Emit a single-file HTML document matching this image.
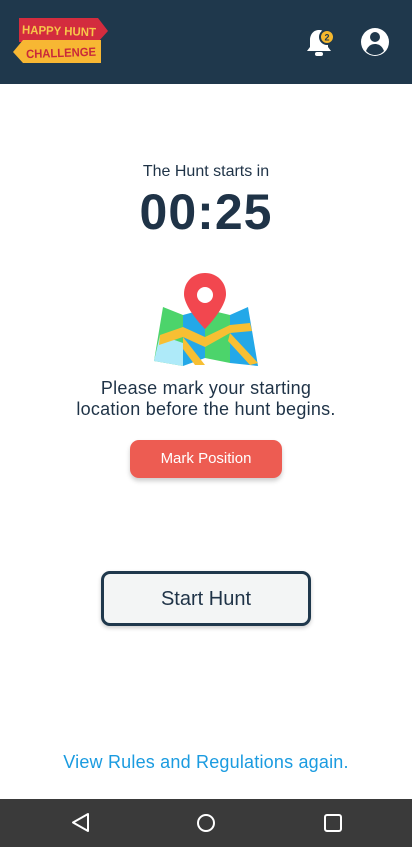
<!DOCTYPE html>
<html><head><meta charset="utf-8"><style>
*{margin:0;padding:0;box-sizing:border-box}
body{width:412px;height:847px;position:relative;background:#fff;font-family:"Liberation Sans",sans-serif;overflow:hidden;color:#1f3347}
.hdr{position:absolute;left:0;top:0;width:412px;height:84px;background:#1f384c}
.t{position:absolute;left:0;width:412px;text-align:center}
.nav{position:absolute;left:0;top:799px;width:412px;height:48px;background:#3a3a3a}
</style></head><body>
<div class="hdr">
<svg width="412" height="84" style="position:absolute;left:0;top:0">
<polygon points="19,18 98,18 108,31 98,42 19,42" fill="#d32c3e"/>
<polygon points="23,40 101,40 101,63 23,63 13,52" fill="#f7b733"/>
<text x="22" y="35" font-family="Liberation Sans" font-weight="bold" font-size="12" fill="#f7c64a" textLength="74" lengthAdjust="spacingAndGlyphs" transform="rotate(2 60 30)">HAPPY HUNT</text>
<text x="26" y="57" font-family="Liberation Sans" font-weight="bold" font-size="12" fill="#c9283a" textLength="70" lengthAdjust="spacingAndGlyphs" transform="rotate(-2 60 52)">CHALLENGE</text>
<path d="M319 30c-6 0-9 5-9 10v7l-3 4h24l-3-4v-7c0-5-3-10-9-10z" fill="#fff"/>
<rect x="315" y="52" width="8" height="4" rx="2" fill="#fff"/>
<circle cx="327" cy="37" r="7" fill="#f5b82e" stroke="#1f384c" stroke-width="2"/>
<text x="327" y="40.5" text-anchor="middle" font-size="9" font-weight="bold" fill="#1f384c">2</text>
<circle cx="375" cy="42" r="14" fill="#fff"/>
<circle cx="375" cy="37" r="5" fill="#1f384c"/>
<path d="M366 51c2-5 5-7 9-7s7 2 9 7c-3 3-6 4-9 4s-6-1-9-4z" fill="#1f384c"/>
</svg>
</div>
<div class="t" style="top:163px;font-size:16px">The Hunt starts in</div>
<div class="t" style="top:183px;font-size:50px;font-weight:bold;letter-spacing:1px">00:25</div>
<svg width="412" height="110" style="position:absolute;left:0;top:265px">
<polygon points="163,42 183,50 183,101 154,96" fill="#4cd46b"/>
<polygon points="183,50 205,44 205,93 183,101" fill="#23a8e8"/>
<polygon points="205,44 230,50 230,98 205,93" fill="#4cd46b"/>
<polygon points="230,50 248,42 258,101 230,98" fill="#23a8e8"/>
<polygon points="154,96 160,70 183,78 183,101" fill="#aeeaf9"/>
<polygon points="160,70 183,62 205,72 230,60 250,58 252,66 230,68 205,82 183,72 159,80" fill="#f7bf33"/>
<polygon points="183,72 205,100 195,100 183,84" fill="#f7bf33"/>
<polygon points="230,68 258,98 250,100 228,76" fill="#f7bf33"/>
<path d="M205 8c-12 0-21 9-21 21 0 14 21 35 21 35s21-21 21-35c0-12-9-21-21-21z" fill="#f2474f"/>
<circle cx="205" cy="30" r="8" fill="#fff"/>
</svg>
<div class="t" style="top:378px;font-size:18px;line-height:21px;letter-spacing:0.25px">Please mark your starting<br>location before the hunt begins.</div>
<div style="position:absolute;left:130px;top:440px;width:152px;height:38px;border-radius:9px;background:#ed5c52;color:#fff;font-size:15px;text-align:center;line-height:38px;box-shadow:0 3px 5px rgba(0,0,0,.2)">Mark Position</div>
<div style="position:absolute;left:101px;top:571px;width:210px;height:55px;border-radius:9px;background:#f3f5f5;border:3px solid #1f384c;font-size:20px;text-align:center;line-height:51px;box-shadow:0 2px 4px rgba(0,0,0,.2)">Start Hunt</div>
<div class="t" style="top:752px;font-size:18px;color:#1a9be0;letter-spacing:0.2px">View Rules and Regulations again.</div>
<div class="nav"><svg width="412" height="48">
<polygon points="88,15 88,32 73,23.5" fill="none" stroke="#fff" stroke-width="2" stroke-linejoin="round"/>
<circle cx="206" cy="24" r="8" fill="none" stroke="#fff" stroke-width="2"/>
<rect x="325" y="16" width="16" height="16" rx="2" fill="none" stroke="#fff" stroke-width="2"/>
</svg></div>
</body></html>
